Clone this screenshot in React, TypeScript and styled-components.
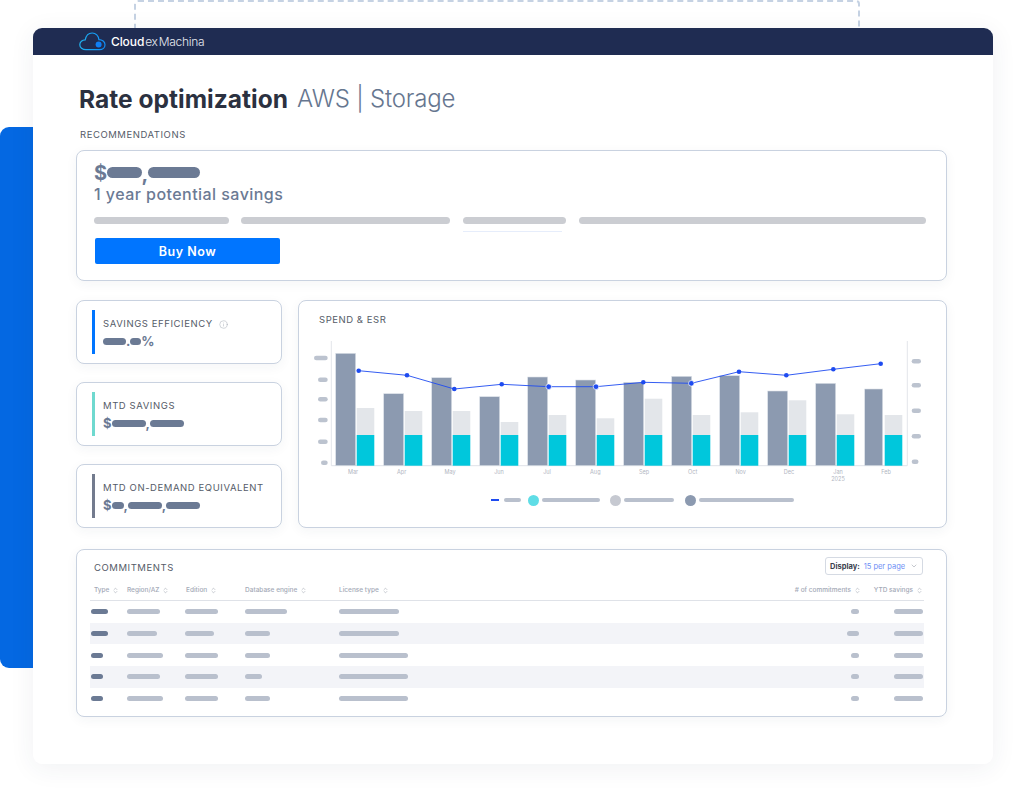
import React from "react";
import styled, { createGlobalStyle } from "styled-components";
import { ChevronDown, ChevronsUpDown, Info } from "lucide-react";

const GlobalStyle = createGlobalStyle`
  html, body {
    margin: 0;
    padding: 0;
    background: #fff;
  }
  * {
    box-sizing: border-box;
  }
  body {
    font-family: Inter, "Noto Sans", "Liberation Sans", sans-serif;
    overflow: hidden;
  }
`;

const Scene = styled.div`
  position: relative;
  width: 1016px;
  height: 793px;
  padding: 28px 23px 29px 33px;
  overflow: hidden;
`;

const DashedFrame = styled.div`
  position: absolute;
  left: 134px;
  top: 0;
  width: 726px;
  height: 60px;
  border: 2px dashed #c5d2e3;
  border-radius: 4px;
`;

const BluePanel = styled.div`
  position: absolute;
  left: 0;
  top: 127px;
  width: 60px;
  height: 541px;
  border-radius: 9px;
  background: #0468e2;
`;

const Window = styled.main`
  position: relative;
  height: 100%;
  display: flex;
  flex-direction: column;
  background: #fff;
  border-radius: 9px;
  box-shadow: 0 4px 26px rgba(40, 50, 80, 0.07);
`;

const TopBar = styled.header`
  height: 27px;
  flex-shrink: 0;
  display: flex;
  align-items: center;
  gap: 5px;
  padding-left: 46px;
  background: #1f2c52;
  border-radius: 9px 9px 0 0;
`;

const LogoText = styled.div`
  display: flex;
  align-items: baseline;
  color: #e6e9f0;
  font-size: 12px;
  letter-spacing: -0.1px;
  b {
    font-weight: 500;
    color: #fff;
  }
  span {
    font-weight: 300;
    margin-left: 1px;
    letter-spacing: -0.3px;
  }
  span + span {
    margin-left: 1px;
  }
`;

const Body = styled.div`
  flex: 1;
  display: flex;
  flex-direction: column;
  padding: 0 46px 0 43px;
`;

const Title = styled.h1`
  margin: 29px 0 0 3px;
  height: 30px;
  display: flex;
  align-items: center;
  gap: 9px;
  font-size: 24.5px;
  line-height: 30px;
  font-weight: 700;
  color: #2b3140;
  letter-spacing: 0.03px;
  white-space: nowrap;
  span {
    font-size: 24px;
    font-weight: 300;
    color: #66768f;
    letter-spacing: -0.2px;
  }
`;

const SectionLabel = styled.div`
  margin: 15px 0 0 4px;
  height: 12px;
  font-size: 9.5px;
  line-height: 12px;
  letter-spacing: 0.55px;
  color: #555b68;
`;

const Card = styled.section`
  background: #fff;
  border: 1px solid #c9d2e0;
  border-radius: 8px;
  box-shadow: 0 3px 12px rgba(40, 50, 80, 0.05);
`;

const SavingsCard = styled(Card)`
  margin-top: 9px;
  height: 131px;
  padding: 10px 20px 0 17px;
`;

const BigValue = styled.div`
  display: flex;
  align-items: center;
  height: 23px;
  font-size: 20px;
  font-weight: 700;
  color: #6b7a94;
`;

const Pill = styled.i<{ $w: number; $h?: number; $c?: string }>`
  display: block;
  flex-shrink: 0;
  width: ${(p) => p.$w}px;
  height: ${(p) => p.$h ?? 5}px;
  border-radius: 6px;
  background: ${(p) => p.$c ?? "#b9c0cd"};
`;

const Comma = styled.span`
  align-self: flex-end;
  line-height: 1;
  margin: 0 -0.6px;
`;

const SavingsCaption = styled.div`
  height: 20px;
  font-size: 16px;
  line-height: 20px;
  font-weight: 500;
  letter-spacing: 0.45px;
  color: #6b7a94;
`;

const SkeletonRow = styled.div`
  display: flex;
  gap: 12.8px;
  margin-top: 13px;
`;

const SkeletonCol = styled.div`
  position: relative;
`;

const Underline = styled.div`
  position: absolute;
  left: 0;
  top: 14px;
  width: 99px;
  height: 1px;
  background: #e6edfb;
`;

const BuyButton = styled.button`
  display: block;
  width: 185px;
  height: 26px;
  margin: 14px 0 0 1px;
  border: 0;
  border-radius: 2px;
  background: #0075ff;
  color: #fff;
  font-family: inherit;
  font-size: 12.5px;
  font-weight: 600;
  letter-spacing: 0.5px;
`;

const MiddleRow = styled.div`
  display: flex;
  gap: 16px;
  height: 228px;
  margin-top: 19px;
`;

const StatColumn = styled.div`
  width: 206px;
  display: flex;
  flex-direction: column;
  justify-content: space-between;
`;

const StatCard = styled(Card)`
  height: 64px;
  display: flex;
  gap: 8px;
  padding: 9px 0 9px 15px;
`;

const Accent = styled.div<{ $c: string }>`
  width: 3px;
  background: ${(p) => p.$c};
`;

const StatBody = styled.div`
  padding-top: 8px;
`;

const StatLabel = styled.div`
  display: flex;
  align-items: center;
  gap: 6px;
  height: 12px;
  font-size: 9.5px;
  line-height: 12px;
  letter-spacing: 0.58px;
  color: #555b68;
  white-space: nowrap;
  svg {
    color: #9aa1ad;
  }
`;

const StatValue = styled.div`
  display: flex;
  align-items: center;
  height: 16px;
  margin-top: 3px;
  font-size: 13px;
  font-weight: 700;
  color: #6b7a94;
`;

const ChartCard = styled(Card)`
  flex: 1;
  padding: 13px 0 0 11px;
`;

const ChartTitle = styled.div`
  margin-left: 9px;
  height: 12px;
  font-size: 9.5px;
  line-height: 12px;
  letter-spacing: 0.55px;
  color: #555b68;
`;

const ChartSvg = styled.svg`
  display: block;
  margin-top: 12px;
`;

const Legend = styled.div`
  display: flex;
  align-items: center;
  height: 12px;
  margin-top: 6px;
  padding-left: 181px;
`;

const LegendLine = styled.i`
  display: block;
  width: 8px;
  height: 1.5px;
  margin-right: 5px;
  background: #1e4bf0;
`;

const LegendDot = styled.i<{ $c: string; $gap: number }>`
  display: block;
  width: 11px;
  height: 11px;
  margin: 0 3px 0 ${(p) => p.$gap}px;
  border-radius: 50%;
  background: ${(p) => p.$c};
`;

const TableCard = styled(Card)`
  margin-top: 21px;
  height: 168px;
  padding: 0 22px 0 13px;
`;

const TableTop = styled.div`
  height: 30px;
  padding: 7px 1px 0 4px;
  display: flex;
  justify-content: space-between;
  align-items: flex-start;
`;

const TableTitle = styled.div`
  margin-top: 5px;
  font-size: 9.5px;
  line-height: 12px;
  letter-spacing: 0.55px;
  color: #555b68;
`;

const DisplaySelect = styled.div`
  width: 98px;
  height: 18px;
  display: flex;
  align-items: center;
  gap: 4px;
  padding: 0 4px;
  border: 1px solid #d5dae3;
  border-radius: 3px;
  font-size: 7.5px;
  white-space: nowrap;
  b {
    font-weight: 700;
    color: #3a404d;
  }
  span {
    color: #6f8ff5;
  }
  svg {
    margin-left: auto;
    color: #8a909c;
  }
`;

const Row = styled.div<{ $head?: boolean; $alt?: boolean }>`
  display: grid;
  grid-template-columns: 36px 58px 60px 94px 1fr 30px 64px;
  align-items: center;
  height: ${(p) => (p.$head ? 21 : 21.7)}px;
  padding: 0 1px;
  background: ${(p) => (p.$alt ? "#f3f4f8" : "transparent")};
  border-bottom: ${(p) => (p.$head ? "1px solid #dfe2e8" : "0")};
`;

const Head = styled.div<{ $end?: boolean; $shift?: number }>`
  display: flex;
  align-items: center;
  gap: 3px;
  justify-self: ${(p) => (p.$end ? "end" : "start")};
  margin-left: ${(p) => (p.$end ? 0 : (p.$shift ?? 0))}px;
  margin-right: ${(p) => (p.$end ? -(p.$shift ?? 0) : 0)}px;
  font-size: 6.5px;
  font-weight: 500;
  color: #a3a9b6;
  white-space: nowrap;
  svg {
    color: #8d93a0;
  }
`;

const EndCell = styled.div`
  justify-self: end;
`;

const months = ["Mar", "Apr", "May", "Jun", "Jul", "Aug", "Sep", "Oct", "Nov", "Dec", "Jan", "Feb"];
const darkTops = [353.3, 393.7, 377.7, 396.7, 377, 380, 382.3, 376.3, 375.7, 391, 383.3, 389];
const lightTops = [408, 411, 411, 422, 415, 418.3, 398.7, 415, 412.3, 400.3, 414.3, 415];
const linePoints: [number, number][] = [
  [358.7, 370.7],
  [407, 375.3],
  [454.3, 389],
  [501.7, 384.3],
  [548.7, 386.7],
  [596, 386.7],
  [643.3, 382.3],
  [691.3, 383.3],
  [739, 371.7],
  [786.3, 375.3],
  [833.3, 369.3],
  [880.7, 363.7],
];
const labelX = [353, 401.7, 450, 499, 547, 595.3, 644, 692.7, 740.7, 789, 838, 886];
const leftTicks = [
  [314, 358],
  [318, 379.7],
  [318, 399.3],
  [318, 420],
  [318, 441.7],
  [321, 462.7],
];
const rightTicks = [
  [921, 361.3],
  [921, 385.3],
  [921, 410.7],
  [921, 436.3],
  [918.5, 461.7],
];
const BASE = 465.7;

const SpendChart = () => (
  <ChartSvg width="620" height="150" viewBox="310 338 620 150">
    <line x1="331.3" y1="341" x2="331.3" y2={BASE} stroke="#e3e5ea" />
    <line x1="907.3" y1="341" x2="907.3" y2={BASE} stroke="#e3e5ea" />
    <line x1="331.3" y1={BASE} x2="907.3" y2={BASE} stroke="#dfe2e8" />
    {leftTicks.map(([x, y]) => (
      <rect key={y} x={x} y={y - 2.3} width={327.7 - x} height="4.6" rx="2.3" fill="#bcc3cf" />
    ))}
    {rightTicks.map(([x, y]) => (
      <rect key={y} x="911.7" y={y - 2.3} width={x - 911.7} height="4.6" rx="2.3" fill="#bcc3cf" />
    ))}
    {months.map((m, i) => {
      const last = i === 11;
      const dx = last ? 864.7 : 335.7 + i * 48;
      const lx = last ? 884.7 : 356.7 + i * 48;
      return (
        <g key={m}>
          <rect x={dx} y={darkTops[i]} width={last ? 18 : 20} height={BASE - darkTops[i]} fill="#8c9ab0" stroke="#dce1e8" strokeWidth="0.6" />
          <rect x={lx} y={lightTops[i]} width="17.6" height={435 - lightTops[i]} fill="#e3e6ea" />
          <rect x={lx} y="435" width="17.6" height={BASE - 435} fill="#00c7dc" />
          <text x={labelX[i]} y="473.5" fontSize="5.5" fill="#b0b5c1" textAnchor="middle">
            {m}
          </text>
        </g>
      );
    })}
    <text x="838" y="481" fontSize="5.5" fill="#b0b5c1" textAnchor="middle">
      2025
    </text>
    <polyline points={linePoints.map((p) => p.join(",")).join(" ")} fill="none" stroke="#1e4bf0" strokeWidth="0.9" />
    {linePoints.map(([x, y], i) => (
      <circle key={x} cx={x} cy={y} r={[4, 5, 7].includes(i) ? 2.8 : 2.3} fill="#1e4bf0" stroke={[4, 5, 7].includes(i) ? "#fff" : "none"} strokeWidth="0.7" />
    ))}
  </ChartSvg>
);

const CloudLogo = () => (
  <svg width="27" height="19" viewBox="0 0 27 19" fill="none">
    <defs>
      <linearGradient id="cloudStroke" x1="0" y1="0" x2="27" y2="0" gradientUnits="userSpaceOnUse">
        <stop offset="0" stopColor="#1fb4f0" />
        <stop offset="1" stopColor="#0f8cf7" />
      </linearGradient>
    </defs>
    <path
      d="M7 17.7C3.4 17.7 0.8 15.6 0.8 12.7C0.8 10 3.2 7.9 6.2 7.9C7 3.8 9.8 1 13.2 1C16.8 1 19.6 3.8 19.9 7.6C23.2 7.6 26 9.8 26 12.7C26 15.6 23.6 17.7 20.4 17.7Z"
      stroke="url(#cloudStroke)"
      strokeWidth="1.2"
    />
    <circle cx="19.6" cy="12.6" r="3" fill="#0f7ff5" />
  </svg>
);

const tableRows = [
  { type: 17, region: 33, edition: 33, db: 42, license: 60, count: 8 },
  { type: 17, region: 30, edition: 29, db: 25, license: 60, count: 12 },
  { type: 12, region: 36, edition: 33, db: 25, license: 69, count: 8 },
  { type: 12, region: 33, edition: 33, db: 17, license: 69, count: 8 },
  { type: 12, region: 36, edition: 33, db: 25, license: 69, count: 8 },
];

const SortIcon = () => <ChevronsUpDown size={7} strokeWidth={1.6} />;

export default function App() {
  return (
    <Scene>
      <GlobalStyle />
      <DashedFrame />
      <BluePanel />
      <Window>
        <TopBar>
          <CloudLogo />
          <LogoText>
            <b>Cloud</b>
            <span>ex</span>
            <span>Machina</span>
          </LogoText>
        </TopBar>
        <Body>
          <Title>
            Rate optimization <span>AWS | Storage</span>
          </Title>
          <SectionLabel>RECOMMENDATIONS</SectionLabel>
          <SavingsCard>
            <BigValue>
              $<Pill $w={35} $h={11} $c="#6b7a94" />
              <Comma>,</Comma>
              <Pill $w={52} $h={11} $c="#6b7a94" />
            </BigValue>
            <SavingsCaption>1 year potential savings</SavingsCaption>
            <SkeletonRow>
              <Pill $w={134.5} $h={7} $c="#cbcdd2" />
              <Pill $w={208.5} $h={7} $c="#cbcdd2" />
              <SkeletonCol>
                <Pill $w={103.5} $h={7} $c="#cbcdd2" />
                <Underline />
              </SkeletonCol>
              <Pill $w={347} $h={7} $c="#cbcdd2" />
            </SkeletonRow>
            <BuyButton>Buy Now</BuyButton>
          </SavingsCard>

          <MiddleRow>
            <StatColumn>
              <StatCard>
                <Accent $c="#0075ff" />
                <StatBody>
                  <StatLabel>
                    SAVINGS EFFICIENCY <Info size={9} strokeWidth={1.2} />
                  </StatLabel>
                  <StatValue>
                    <Pill $w={23} $h={7} $c="#6b7a94" />.
                    <Pill $w={11} $h={7} $c="#6b7a94" />%
                  </StatValue>
                </StatBody>
              </StatCard>
              <StatCard>
                <Accent $c="#6fd9cf" />
                <StatBody>
                  <StatLabel>MTD SAVINGS</StatLabel>
                  <StatValue>
                    $<Pill $w={34} $h={7} $c="#6b7a94" />,<Pill $w={34} $h={7} $c="#6b7a94" />
                  </StatValue>
                </StatBody>
              </StatCard>
              <StatCard>
                <Accent $c="#737b8e" />
                <StatBody>
                  <StatLabel>MTD ON-DEMAND EQUIVALENT</StatLabel>
                  <StatValue>
                    $<Pill $w={12} $h={7} $c="#6b7a94" />,<Pill $w={34} $h={7} $c="#6b7a94" />,
                    <Pill $w={34} $h={7} $c="#6b7a94" />
                  </StatValue>
                </StatBody>
              </StatCard>
            </StatColumn>

            <ChartCard>
              <ChartTitle>SPEND &amp; ESR</ChartTitle>
              <SpendChart />
              <Legend>
                <LegendLine />
                <Pill $w={17} $h={4.6} />
                <LegendDot $c="#5fdde6" $gap={7} />
                <Pill $w={58} $h={4.6} />
                <LegendDot $c="#c6c9d1" $gap={10} />
                <Pill $w={50} $h={4.6} />
                <LegendDot $c="#8c9ab0" $gap={11} />
                <Pill $w={95} $h={4.6} />
              </Legend>
            </ChartCard>
          </MiddleRow>

          <TableCard>
            <TableTop>
              <TableTitle>COMMITMENTS</TableTitle>
              <DisplaySelect>
                <b>Display:</b>
                <span>15 per page</span>
                <ChevronDown size={8} strokeWidth={1.5} />
              </DisplaySelect>
            </TableTop>
            <Row $head>
              <Head $shift={3}>
                Type <SortIcon />
              </Head>
              <Head>
                Region/AZ <SortIcon />
              </Head>
              <Head $shift={1}>
                Edition <SortIcon />
              </Head>
              <Head>
                Database engine <SortIcon />
              </Head>
              <Head>
                License type <SortIcon />
              </Head>
              <Head $end $shift={2}>
                # of commitments <SortIcon />
              </Head>
              <Head $end>
                YTD savings <SortIcon />
              </Head>
            </Row>
            {tableRows.map((r, i) => (
              <Row key={i} $alt={i % 2 === 1}>
                <Pill $w={r.type} $c="#6b7a94" />
                <Pill $w={r.region} />
                <Pill $w={r.edition} />
                <Pill $w={r.db} />
                <Pill $w={r.license} />
                <EndCell>
                  <Pill $w={r.count} />
                </EndCell>
                <EndCell>
                  <Pill $w={29} />
                </EndCell>
              </Row>
            ))}
          </TableCard>
        </Body>
      </Window>
    </Scene>
  );
}
